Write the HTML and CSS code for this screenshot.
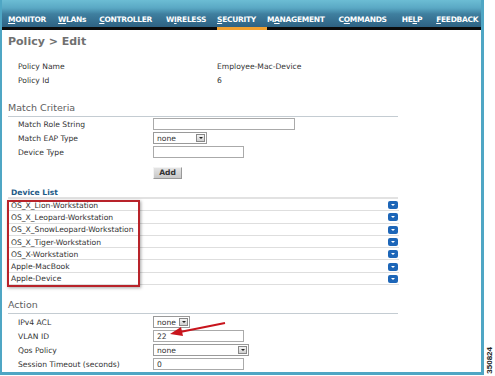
FILE: index.html
```html
<!DOCTYPE html>
<html lang="en">
<head>
    <meta charset="UTF-8">
    <title>Policy &gt; Edit</title>
    <link rel="stylesheet" href="styles.css">
</head>
<body>
    <div class="page">
        <div class="frame">
            <header>
                <nav>
                    <a href="#"><u>M</u>ONITOR</a>
                    <a href="#"><u>W</u>LANs</a>
                    <a href="#"><u>C</u>ONTROLLER</a>
                    <a href="#">W<u>I</u>RELESS</a>
                    <a href="#" class="active"><u>S</u>ECURITY</a>
                    <a href="#">M<u>A</u>NAGEMENT</a>
                    <a href="#">C<u>O</u>MMANDS</a>
                    <a href="#">HE<u>L</u>P</a>
                    <a href="#"><u>F</u>EEDBACK</a>
                </nav>
            </header>
            <div class="bar"><span class="bar-active"></span></div>

            <div class="content">
                <h1>Policy &gt; Edit</h1>

                <div class="info">
                    <span>Policy Name</span><span>Employee-Mac-Device</span>
                    <span>Policy Id</span><span>6</span>
                </div>

                <h2>Match Criteria</h2>
                <div class="form">
                    <span>Match Role String</span>
                    <span><input type="text" class="input-wide"></span>
                    <span>Match EAP Type</span>
                    <span class="select sel-eap">none<i class="sel-btn"></i></span>
                    <span>Device Type</span>
                    <span><input type="text" class="input-mid"></span>
                    <span></span>
                    <span class="add-row"><button class="add-button">Add</button></span>
                </div>

                <h3>Device List</h3>
                <div class="device-list">
                    <div class="device"><span>OS_X_Lion-Workstation</span><i class="blue-btn"></i></div>
                    <div class="device"><span>OS_X_Leopard-Workstation</span><i class="blue-btn"></i></div>
                    <div class="device"><span>OS_X_SnowLeopard-Workstation</span><i class="blue-btn"></i></div>
                    <div class="device"><span>OS_X_Tiger-Workstation</span><i class="blue-btn"></i></div>
                    <div class="device"><span>OS_X-Workstation</span><i class="blue-btn"></i></div>
                    <div class="device"><span>Apple-MacBook</span><i class="blue-btn"></i></div>
                    <div class="device"><span>Apple-Device</span><i class="blue-btn"></i></div>
                    <div class="highlight"></div>
                </div>

                <h2 class="action-title">Action</h2>
                <div class="form action">
                    <span>IPv4 ACL</span>
                    <span class="select sel-acl">none<i class="sel-btn"></i></span>
                    <span>VLAN ID</span>
                    <span><input type="text" class="input-mid" value="22"></span>
                    <span>Qos Policy</span>
                    <span class="select sel-qos">none<i class="sel-btn"></i></span>
                    <span>Session Timeout (seconds)</span>
                    <span><input type="text" class="input-mid" value="0"></span>
                    <svg class="arrow" width="60" height="16" viewBox="0 0 60 16">
                        <line x1="57" y1="1" x2="12" y2="10" stroke="#c8141c" stroke-width="2"/>
                        <polygon points="2,12 13,5 15,14" fill="#c8141c"/>
                    </svg>
                </div>
            </div>
        </div>
        <div class="side"><span class="fig-id">350824</span></div>
    </div>
</body>
</html>
```

FILE: styles.css
```css
* {
    margin: 0;
    padding: 0;
    box-sizing: border-box;
    font-family: 'DejaVu Sans', Verdana, sans-serif;
}

body {
    background: white;
    color: #333;
    width: 495px;
    height: 376px;
    overflow: hidden;
}

.page {
    display: flex;
    height: 376px;
}

/* Frame */
.frame {
    width: 484px;
    height: 375px;
    border-left: 2px solid #4fa6c4;
    border-right: 3px solid #4fa6c4;
    border-bottom: 3px solid #4fa6c4;
}

header {
    height: 27px;
    background: linear-gradient(180deg, #6cbdd4 0px, #5aa8c4 8px, #3f7f9f 14px, #2e6283 27px);
}

nav {
    display: flex;
    padding-top: 15px;
    padding-left: 6px;
}

nav a {
    color: white;
    text-decoration: none;
    font-size: 7.5px;
    font-weight: bold;
    letter-spacing: -0.3px;
    white-space: nowrap;
    margin-right: 12px;
}

nav a:nth-child(2) { margin-right: 13px; }
nav a:nth-child(3) { margin-right: 14px; }
nav a:nth-child(4) { margin-right: 11px; }
nav a:nth-child(5) { margin-right: 11px; }
nav a:nth-child(6) { margin-right: 14px; }
nav a:nth-child(7) { margin-right: 15px; }
nav a:nth-child(8) { margin-right: 14px; }

.bar {
    height: 3px;
    background: #0b0b0b;
    padding-left: 215px;
}

.bar-active {
    display: block;
    width: 50px;
    height: 3px;
    background: #f0a030;
}

/* Content */
.content {
    padding-left: 6px;
    width: 396px;
    position: relative;
}

h1 {
    font-size: 11px;
    color: #707070;
    font-weight: bold;
    margin-top: 5px;
    height: 14px;
}

.info {
    display: grid;
    grid-template-columns: 199px auto;
    row-gap: 5px;
    padding-left: 10px;
    margin-top: 13px;
    font-size: 7.6px;
    line-height: 9px;
}

h2 {
    font-size: 9.5px;
    font-weight: normal;
    color: #606060;
    margin-top: 17px;
    padding-bottom: 2px;
    border-bottom: 1px solid #c4ccd2;
    height: 15px;
}

.form {
    display: grid;
    grid-template-columns: 135px auto;
    grid-auto-rows: 14px;
    align-items: center;
    padding-left: 10px;
    margin-top: 0;
    font-size: 7.6px;
    position: relative;
}

input {
    display: block;
    height: 12px;
    border: 1px solid #aaa;
    font-size: 7.6px;
    padding-left: 3px;
    color: #333;
}

.input-wide { width: 142px; }
.input-mid { width: 91px; }

.select {
    display: flex;
    align-items: center;
    justify-content: space-between;
    height: 12px;
    border: 1px solid #9a9a9a;
    padding-left: 3px;
    padding-right: 1px;
    font-size: 7.6px;
    background: white;
}

.sel-eap { width: 54px; }
.sel-acl { width: 37px; }
.sel-qos { width: 96px; }

.sel-btn {
    display: block;
    width: 9px;
    height: 8px;
    border: 1px solid #888;
    background: linear-gradient(#f4f4f4, #cfcfcf);
    position: relative;
}

.sel-btn::after {
    content: "";
    position: absolute;
    left: 2px;
    top: 2px;
    border-left: 2px solid transparent;
    border-right: 2px solid transparent;
    border-top: 2px solid #222;
}

.add-row {
    padding-top: 13px;
}

.add-button {
    display: block;
    width: 29px;
    height: 12px;
    font-size: 7.6px;
    font-weight: bold;
    color: #333;
    background: linear-gradient(#e4e4e4, #c8c8c8);
    border: 1px solid #999;
    border-top-color: #f4f4f4;
    border-left-color: #f4f4f4;
}

/* Device list */
h3 {
    margin-top: 15px;
    padding-left: 3px;
    font-size: 7.6px;
    font-weight: bold;
    color: #1d5a86;
    height: 11px;
    line-height: 9px;
    border-bottom: 2px solid #e2e2e2;
}

.device-list {
    position: relative;
    width: 391px;
}

.device {
    display: flex;
    justify-content: space-between;
    align-items: center;
    height: 12.3px;
    border-bottom: 1px solid #dedede;
    padding-left: 3px;
    padding-top: 1px;
    font-size: 7.6px;
}

.blue-btn {
    display: block;
    width: 10px;
    height: 8px;
    background: #1d66b8;
    border-radius: 2px;
    position: relative;
    margin-right: 1px;
}

.blue-btn::after {
    content: "";
    position: absolute;
    left: 3px;
    top: 3px;
    border-left: 2px solid transparent;
    border-right: 2px solid transparent;
    border-top: 2px solid white;
}

.highlight {
    position: absolute;
    left: -1px;
    top: 1px;
    width: 133px;
    height: 87px;
    border: 2px solid #b8232a;
    box-shadow: 1px 1px 3px rgba(0, 0, 0, 0.35);
}

.action-title {
    margin-top: 14px;
}

.action {
    margin-top: 1px;
}

.arrow {
    position: absolute;
    left: 160px;
    top: 7px;
}

/* Figure number */
.side {
    flex: 1;
    display: flex;
    align-items: flex-end;
    justify-content: center;
    padding-bottom: 2px;
}

.fig-id {
    writing-mode: vertical-rl;
    transform: rotate(180deg);
    font-family: 'Liberation Sans', Arial, sans-serif;
    font-size: 8px;
    font-weight: bold;
    color: #222;
}
```
